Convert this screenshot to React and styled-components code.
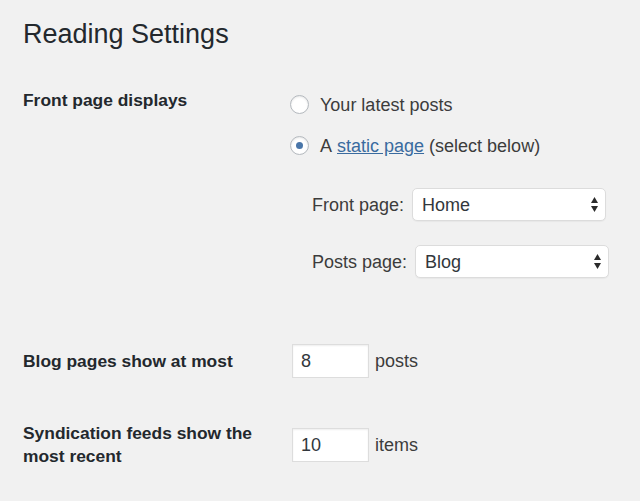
import React from "react";
import styled, { createGlobalStyle } from "styled-components";

const GlobalStyle = createGlobalStyle`
  html, body {
    margin: 0;
    padding: 0;
    background: #f1f1f1;
  }
  body {
    font-family: "Liberation Sans", Arial, Helvetica, sans-serif;
    color: #444;
  }
`;

const Wrap = styled.div`
  width: 640px;
  height: 501px;
  padding: 0 23px;
  box-sizing: border-box;
  overflow: hidden;
  background: #f1f1f1;
`;

const Title = styled.h1`
  margin: 17px 0 10px;
  font-size: 27px;
  line-height: 35px;
  font-weight: 400;
  color: #23282d;
`;

const Row = styled.div`
  display: grid;
  grid-template-columns: 267px 1fr;
  align-items: ${p => (p.top ? "start" : "center")};
  padding: 22px 0;
`;

const Label = styled.div`
  width: 245px;
  padding-top: ${p => p.pt || 0}px;
  font-size: 17.4px;
  line-height: 23px;
  font-weight: 700;
  color: #23282d;
`;

const Field = styled.div`
  display: flex;
  flex-direction: column;
  padding-top: ${p => p.pt || 0}px;
`;

const Option = styled.label`
  display: flex;
  align-items: flex-start;
  height: 24px;
  font-size: 18px;
  line-height: 24px;
  color: #3c3c3c;
  & + & {
    margin-top: 17px;
  }
`;

const Radio = styled.span`
  position: relative;
  width: 17px;
  height: 17px;
  margin: 2px 11px 0 0;
  border: 1px solid #b4b9be;
  border-radius: 50%;
  background: #fff;
  box-shadow: inset 0 1px 2px rgba(0, 0, 0, 0.1);
  flex-shrink: 0;

  &::after {
    content: "";
    display: ${p => (p.checked ? "block" : "none")};
    position: absolute;
    top: 5px;
    left: 5px;
    width: 7px;
    height: 7px;
    border-radius: 50%;
    background: #4a76a9;
  }
`;

const Link = styled.a`
  color: #3a6b9f;
  text-decoration: underline;
  margin: 0 5px;
`;

const Pickers = styled.div`
  display: flex;
  flex-direction: column;
  gap: 24px;
  margin: 30px 0 22px 22px;
`;

const PickerRow = styled.div`
  display: flex;
  align-items: center;
  font-size: 18px;
  line-height: 24px;
  color: #3c3c3c;
`;

const PickerLabel = styled.span`
  margin-right: 8px;
`;

const SelectBox = styled.div`
  display: flex;
  align-items: center;
  justify-content: space-between;
  width: 194px;
  height: 33px;
  box-sizing: border-box;
  padding: 0 7px 0 9px;
  background: #fff;
  border: 1px solid #dcdcdc;
  border-radius: 5px;
  box-shadow: 0 1px 1px rgba(0, 0, 0, 0.04);
  font-size: 18px;
  color: #32373c;
`;

const Arrows = () => (
  <svg width="7" height="15" viewBox="0 0 7 15">
    <polygon points="0,6 3.5,0 7,6" fill="#2b2b2b" />
    <polygon points="0,9 7,9 3.5,15" fill="#2b2b2b" />
  </svg>
);

const Inline = styled.div`
  display: flex;
  align-items: center;
  font-size: 18px;
  line-height: 24px;
  color: #3c3c3c;
`;

const NumberBox = styled.div`
  width: 77px;
  height: 34px;
  box-sizing: border-box;
  margin: 0 6px 0 2px;
  padding: 0 8px;
  display: flex;
  align-items: center;
  background: #fff;
  border: 1px solid #dddddd;
  box-shadow: inset 0 1px 2px rgba(0, 0, 0, 0.07);
  color: #32373c;
`;

export default function App() {
  return (
    <Wrap>
      <GlobalStyle />
      <Title>Reading Settings</Title>

      <Row top>
        <Label pt={5}>Front page displays</Label>
        <Field pt={9}>
          <Option>
            <Radio />
            Your latest posts
          </Option>
          <Option>
            <Radio checked />
            A<Link href="#">static page</Link>(select below)
          </Option>
          <Pickers>
            <PickerRow>
              <PickerLabel>Front page:</PickerLabel>
              <SelectBox>
                Home
                <Arrows />
              </SelectBox>
            </PickerRow>
            <PickerRow>
              <PickerLabel>Posts page:</PickerLabel>
              <SelectBox>
                Blog
                <Arrows />
              </SelectBox>
            </PickerRow>
          </Pickers>
        </Field>
      </Row>

      <Row>
        <Label>Blog pages show at most</Label>
        <Inline>
          <NumberBox>8</NumberBox>
          posts
        </Inline>
      </Row>

      <Row>
        <Label>Syndication feeds show the most recent</Label>
        <Inline>
          <NumberBox>10</NumberBox>
          items
        </Inline>
      </Row>
    </Wrap>
  );
}
